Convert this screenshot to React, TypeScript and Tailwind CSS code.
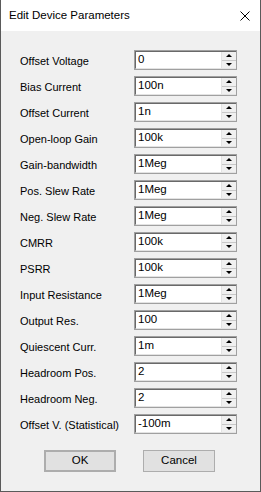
const params: [string, string][] = [
  ["Offset Voltage", "0"],
  ["Bias Current", "100n"],
  ["Offset Current", "1n"],
  ["Open-loop Gain", "100k"],
  ["Gain-bandwidth", "1Meg"],
  ["Pos. Slew Rate", "1Meg"],
  ["Neg. Slew Rate", "1Meg"],
  ["CMRR", "100k"],
  ["PSRR", "100k"],
  ["Input Resistance", "1Meg"],
  ["Output Res.", "100"],
  ["Quiescent Curr.", "1m"],
  ["Headroom Pos.", "2"],
  ["Headroom Neg.", "2"],
  ["Offset V. (Statistical)", "-100m"],
];

function Arrow({ down }: { down?: boolean }) {
  return (
    <svg width="6" height="3" viewBox="0 0 6 3" className="block">
      <path d={down ? "M0 0H6L3 3Z" : "M3 0L6 3H0Z"} fill="#000" />
    </svg>
  );
}

function SpinField({ value }: { value: string }) {
  return (
    <div className="flex h-[20px] w-[103px] border border-[#a0a0a0]">
      <div className="flex flex-1 border-l border-t border-[#696969] border-b-[#e3e3e3] border-b">
        <div className="flex flex-1 items-center bg-white pl-[2px] text-[11.5px] leading-none text-black">
          {value}
        </div>
        <div className="flex w-[15px] flex-col border-l border-[#e3e3e3] bg-[#f0f0f0]">
          <div className="flex flex-1 items-center justify-center border-b border-[#c8c8c8]">
            <Arrow />
          </div>
          <div className="flex flex-1 items-center justify-center">
            <Arrow down />
          </div>
        </div>
      </div>
    </div>
  );
}

export default function App() {
  return (
    <div
      className="flex h-[492px] w-[261px] flex-col border-x border-b border-[#5a5a5a] bg-[#f0f0f0] text-black"
      style={{ fontFamily: '"Liberation Sans", Arial, sans-serif' }}
    >
      <div className="flex h-[31px] items-center justify-between bg-white pl-[8px] pr-[10px]">
        <span className="text-[11.5px]">Edit Device Parameters</span>
        <svg width="10" height="10" viewBox="0 0 10 10">
          <path d="M0.5 0.5L9.5 9.5M9.5 0.5L0.5 9.5" stroke="#000" strokeWidth="1" />
        </svg>
      </div>

      <div className="flex flex-col gap-[6px] pl-[19px] pt-[19px]">
        {params.map(([label, value]) => (
          <div key={label} className="flex h-[20px] items-center">
            <span className="w-[114px] pt-[2px] text-[11px] leading-none">{label}</span>
            <SpinField value={value} />
          </div>
        ))}
      </div>

      <div className="mt-[16px] flex gap-[27px] pl-[43px]">
        <button className="h-[22px] w-[72px] border-2 border-[#adadad] bg-[#e1e1e1] text-[11.5px]">
          OK
        </button>
        <button className="h-[22px] w-[72px] border border-[#adadad] bg-[#e1e1e1] text-[11.5px]">
          Cancel
        </button>
      </div>
    </div>
  );
}
